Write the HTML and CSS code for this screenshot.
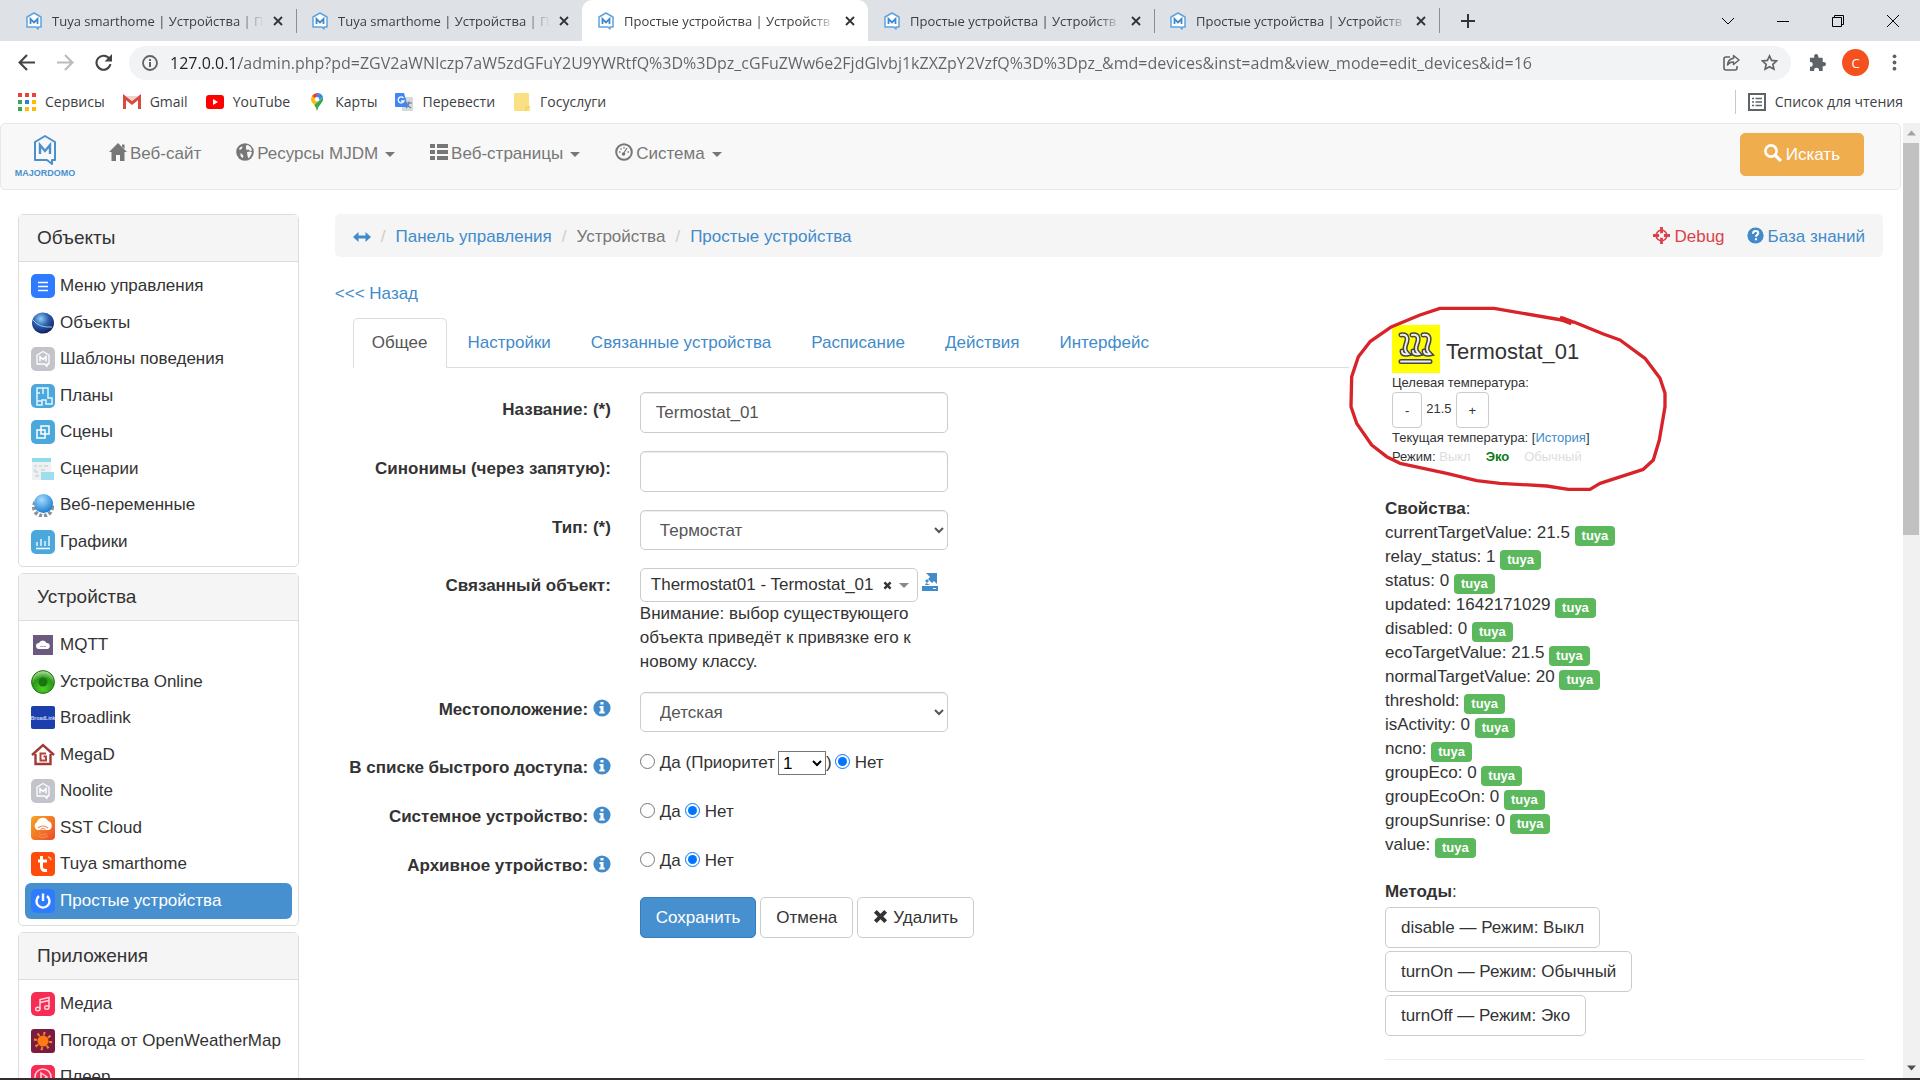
FILE: index.html
```html
<!DOCTYPE html>
<html lang="ru">
<head>
    <meta charset="UTF-8">
    <meta name="viewport" content="width=device-width, initial-scale=1.0">
    <title>Простые устройства | Устройства</title>
    <link rel="stylesheet" href="styles.css">
</head>
<body>

<!-- Icon sprite -->
<svg class="sprite" aria-hidden="true">
    <defs>
        <linearGradient id="g-sst" x1="0" y1="0" x2="1" y2="1"><stop offset="0" stop-color="#f6a623"/><stop offset="1" stop-color="#ee4a2c"/></linearGradient>
        <radialGradient id="g-ball" cx="0.4" cy="0.3" r="0.7"><stop offset="0" stop-color="#8fd0f5"/><stop offset="0.5" stop-color="#2c5fb0"/><stop offset="1" stop-color="#12205f"/></radialGradient>
        <radialGradient id="g-web" cx="0.4" cy="0.3" r="0.7"><stop offset="0" stop-color="#a5dcfb"/><stop offset="1" stop-color="#1d7fd6"/></radialGradient>
        <radialGradient id="g-online" cx="0.5" cy="0.8" r="0.8"><stop offset="0" stop-color="#4bd12a"/><stop offset="0.6" stop-color="#2a9a14"/><stop offset="1" stop-color="#b9e6ae"/></radialGradient>
    </defs>
    <symbol id="i-logo" viewBox="0 0 24 32"><path d="M12 2 22 8v18h-3v4l-5-4H2V8z" fill="none" stroke="#4a90cf" stroke-width="2" stroke-linejoin="round"/><path d="M7 20v-9l5 6 5-6v9" fill="none" stroke="#4a90cf" stroke-width="2.4"/></symbol>
    <symbol id="i-fav" viewBox="0 0 18 18"><path d="M9 1 16 5v10h-3v2l-2-2H2V5z" fill="#fff" stroke="#5fa3dd" stroke-width="1.500" stroke-linejoin="round"/><path d="M5.500 12V7l3.500 3.500L12.500 7v5" fill="none" stroke="#3d8ad0" stroke-width="1.800"/></symbol>
    <symbol id="i-close" viewBox="0 0 10 10"><path d="M1 1l8 8M9 1L1 9" stroke="currentColor" stroke-width="1.800"/></symbol>
    <symbol id="i-home" viewBox="0 0 18 18"><path d="M9 0 18 9h-2.500v9H11v-6H7v6H2.500V9H0z M13 1.500h2.500V6L13 3.500z" fill="currentColor"/></symbol>
    <symbol id="i-globe" viewBox="0 0 18 18"><circle cx="9" cy="9" r="8.800" fill="currentColor"/><path d="M10 2.500l2-.5 3 2.500 1 3-2 .5-1.500-1.500-2 .5-.5-2zM11 9l3.500-.5 1.500 1-1.500 3.500-2 2.500-1-2.500zM3 6l1.500-2 2-.5L6 5.500 4 7zM4.500 10l2 1.500 1 2-1 1.500-2-2z" fill="#f8f8f8"/></symbol>
    <symbol id="i-list" viewBox="0 0 18 18"><path d="M0 1h5v4H0zM7 1h11v4H7zM0 7h5v4H0zM7 7h11v4H7zM0 13h5v4H0zM7 13h11v4H7z" fill="currentColor"/></symbol>
    <symbol id="i-dash" viewBox="0 0 18 18"><circle cx="9" cy="9" r="7.800" fill="none" stroke="currentColor" stroke-width="2"/><path d="M8.500 10.500 12 5M4 9h1.500M12.500 9H14M5.500 5.500l1 1M9 4v1.500" stroke="currentColor" stroke-width="1.300"/><circle cx="8.500" cy="11" r="1.800" fill="currentColor"/></symbol>
    <symbol id="i-search" viewBox="0 0 18 18"><circle cx="7" cy="7" r="5.600" fill="none" stroke="currentColor" stroke-width="2.600"/><path d="M11 11l6 6" stroke="currentColor" stroke-width="3.200"/></symbol>
    <symbol id="i-resize" viewBox="0 0 18 12"><path d="M0 6 5.500 1v3.500h7V1L18 6l-5.500 5V7.500h-7V11z" fill="currentColor"/></symbol>
    <symbol id="i-target" viewBox="0 0 18 18"><circle cx="9" cy="9" r="5.600" fill="none" stroke="currentColor" stroke-width="1.800"/><path d="M7.500 0h3v6.500h-3zM7.500 11.500h3V18h-3zM0 7.500h6.500v3H0zM11.500 7.500H18v3h-6.500z" fill="currentColor"/></symbol>
    <symbol id="i-question" viewBox="0 0 18 18"><circle cx="9" cy="9" r="8.600" fill="currentColor"/><path d="M6.300 7.200c0-4 5.600-3.800 5.600-.8 0 2-2.400 1.800-2.400 4M9.500 12v2" fill="none" stroke="#fff" stroke-width="2.200"/></symbol>
    <symbol id="i-info" viewBox="0 0 18 18"><circle cx="9" cy="9" r="8.600" fill="currentColor"/><path d="M7.500 3h3v2.500h-3zM6.500 7h4v5.500h1.200v2H6.300v-2h1.200V9h-1z" fill="#fff"/></symbol>
    <symbol id="i-share" viewBox="0 0 16 18"><path d="M4 0h11v11l-3-3-2 2-4-4 2-2zM5 6l2 2-2 2-2-2zM4 10l4 2H3zM0 13h16v5H0z" fill="currentColor"/><path d="M11 15.500h3" stroke="#fff"/></symbol>
    <symbol id="i-remove" viewBox="0 0 16 16"><path d="M4 1l4 4 4-4 3 3-4 4 4 4-3 3-4-4-4 4-3-3 4-4-4-4z" fill="currentColor"/></symbol>
    <symbol id="i-mjd" viewBox="0 0 24 24"><rect width="24" height="24" rx="5" fill="#c3c3cb"/><path d="M12 4.500 18 8v9h-2v2.500L13.500 17H6V8z" fill="none" stroke="#fff" stroke-width="1.300" stroke-linejoin="round"/><path d="M9 14.500v-5l3 3 3-3v5" fill="none" stroke="#fff" stroke-width="1.500"/></symbol>
    <symbol id="i-heat" viewBox="0 0 48 48">
        <rect width="48" height="48" fill="#ff0"/>
        <g fill="none" stroke-linecap="round">
            <path d="M9 10c7-1 7 4 5 9s-1 7 2 10c-5 1-6-1-6-3M20 10c7-1 7 4 5 9s-1 7 2 10c-5 1-6-1-6-3M31 10c7-1 7 4 5 9s-1 7 2 10c-5 1-6-1-6-3M9 36.500h29" stroke="#444" stroke-width="5"/>
            <path d="M9 10c7-1 7 4 5 9s-1 7 2 10c-5 1-6-1-6-3M20 10c7-1 7 4 5 9s-1 7 2 10c-5 1-6-1-6-3M31 10c7-1 7 4 5 9s-1 7 2 10c-5 1-6-1-6-3M9 36.500h29" stroke="#eee" stroke-width="2"/>
        </g>
    </symbol>
</svg>

<!-- Browser tabs -->
<div class="tab-strip">
    <div class="browser-tab"><svg class="favicon"><use href="#i-fav"/></svg><span class="tab-title">Tuya smarthome | Устройства | П</span><button class="tab-close" aria-label="Закрыть"><svg><use href="#i-close"/></svg></button></div>
    <div class="browser-tab divided"><svg class="favicon"><use href="#i-fav"/></svg><span class="tab-title">Tuya smarthome | Устройства | П</span><button class="tab-close" aria-label="Закрыть"><svg><use href="#i-close"/></svg></button></div>
    <div class="browser-tab current"><svg class="favicon"><use href="#i-fav"/></svg><span class="tab-title">Простые устройства | Устройств</span><button class="tab-close" aria-label="Закрыть"><svg><use href="#i-close"/></svg></button></div>
    <div class="browser-tab"><svg class="favicon"><use href="#i-fav"/></svg><span class="tab-title">Простые устройства | Устройств</span><button class="tab-close" aria-label="Закрыть"><svg><use href="#i-close"/></svg></button></div>
    <div class="browser-tab divided"><svg class="favicon"><use href="#i-fav"/></svg><span class="tab-title">Простые устройства | Устройств</span><button class="tab-close" aria-label="Закрыть"><svg><use href="#i-close"/></svg></button></div>
    <button class="new-tab" aria-label="Новая вкладка"><svg viewBox="0 0 14 14"><path d="M7 0v14M0 7h14" stroke="#333" stroke-width="2"/></svg></button>
    <div class="window-buttons">
        <button aria-label="Список вкладок"><svg viewBox="0 0 12 12"><path d="M0 3l6 6 6-6" fill="none" stroke="#000"/></svg></button>
        <button aria-label="Свернуть"><svg viewBox="0 0 12 12"><path d="M0 6.500h12" stroke="#000"/></svg></button>
        <button aria-label="Развернуть"><svg viewBox="0 0 12 12"><path d="M.5 2.500h9v9h-9zM2.500 2.500v-2h9v9h-2" fill="none" stroke="#000"/></svg></button>
        <button aria-label="Закрыть окно"><svg viewBox="0 0 12 12"><path d="M0 0l12 12M12 0L0 12" stroke="#000"/></svg></button>
    </div>
</div>

<!-- Address bar -->
<div class="toolbar">
    <button class="tool" aria-label="Назад"><svg viewBox="0 0 16 16"><path d="M16 8H2M8.500 1 1.500 8l7 7" fill="none" stroke="#444" stroke-width="2"/></svg></button>
    <button class="tool" aria-label="Вперёд"><svg viewBox="0 0 16 16"><path d="M0 8h14M7.500 1l7 7-7 7" fill="none" stroke="#bbb" stroke-width="2"/></svg></button>
    <button class="tool" aria-label="Обновить"><svg viewBox="0 0 16 16"><path d="M13.500 4.500A6.600 6.600 0 1 0 14.500 9.500" fill="none" stroke="#444" stroke-width="2"/><path d="M16 0v7H9z" fill="#444"/></svg></button>
    <div class="omnibox">
        <svg class="site-info" viewBox="0 0 16 16"><circle cx="8" cy="8" r="7" fill="none" stroke="#5f6368" stroke-width="1.800"/><path d="M7 7h2v5H7zM7 4h2v2H7z" fill="#5f6368"/></svg>
        <input class="url" type="text" aria-label="Адрес" value="127.0.0.1/admin.php?pd=ZGV2aWNlczp7aW5zdGFuY2U9YWRtfQ%3D%3Dpz_cGFuZWw6e2FjdGlvbj1kZXZpY2VzfQ%3D%3Dpz_&amp;md=devices&amp;inst=adm&amp;view_mode=edit_devices&amp;id=16">
        <button class="tool" aria-label="Поделиться"><svg viewBox="0 0 17 17"><path d="M7 3H3Q1 3 1 5v9q0 2 2 2h9q2 0 2-2v-2" fill="none" stroke="#5f6368" stroke-width="1.600"/><path d="M10.500 1.500 16 6l-5.500 4.500V8Q7 7.500 4.500 11 5 5 10.500 4.200z" fill="none" stroke="#5f6368" stroke-width="1.500" stroke-linejoin="round"/></svg></button>
        <button class="tool" aria-label="Закладка"><svg viewBox="0 0 18 18"><path d="M9 2l2.200 4.800 5.300.6-4 3.500 1.200 5.200L9 13.500l-4.700 2.600 1.200-5.200-4-3.500 5.300-.6z" fill="none" stroke="#5f6368" stroke-width="1.700"/></svg></button>
    </div>
    <button class="tool" aria-label="Расширения"><svg viewBox="0 0 18 18"><path d="M1 4h4.500Q5 0 7.500 0T10 4h4.500v4.500Q18 8 18 10.500T14.500 13v5h-4Q11 14.500 8 14.500T5.500 18H1v-4.500Q4 14 4 11T1 8.500z" fill="#5f6368"/></svg></button>
    <button class="avatar">C</button>
    <button class="tool" aria-label="Меню"><svg viewBox="0 0 18 18"><circle cx="9" cy="2.500" r="2" fill="#5f6368"/><circle cx="9" cy="9" r="2" fill="#5f6368"/><circle cx="9" cy="15.500" r="2" fill="#5f6368"/></svg></button>
</div>

<!-- Bookmarks -->
<div class="bookmarks">
    <a href="#"><svg viewBox="0 0 18 18"><path d="M0 0h4v4H0zM7 0h4v4H7zM14 0h4v4h-4z" fill="#ea4335"/><path d="M0 7h4v4H0z" fill="#34a853"/><path d="M7 7h4v4H7z" fill="#2a7de1"/><path d="M14 7h4v4h-4zM7 14h4v4H7zM14 14h4v4h-4z" fill="#fbbc05"/><path d="M0 14h4v4H0z" fill="#34a853"/></svg>Сервисы</a>
    <a href="#"><svg viewBox="0 0 18 18"><path d="M1.500 16V4L9 10l7.500-6v12" fill="none" stroke="#d84a3e" stroke-width="3"/><path d="M3 3h12l-6 5z" fill="#f1d3d0"/></svg>Gmail</a>
    <a href="#"><svg viewBox="0 0 18 18"><rect y="2" width="18" height="14" rx="3" fill="#f00"/><path d="M7 6l5 3-5 3z" fill="#fff"/></svg>YouTube</a>
    <a href="#"><svg viewBox="0 0 18 18"><path d="M9 18Q8 13 4 9.500A6.400 6.400 0 0 1 4 3l5 3.500z" fill="#fbbc05"/><path d="M4 3a6.500 6.500 0 0 1 6-3L8 6z" fill="#ea4335"/><path d="M10 0q4 .5 5 4L9 9 7 6z" fill="#4285f4"/><path d="M15 4q1 3-1.500 6Q10 13.500 9 18q-1-4-2.500-6z" fill="#34a853"/><circle cx="9" cy="6.300" r="2.300" fill="#fff"/></svg>Карты</a>
    <a href="#"><svg viewBox="0 0 18 18"><rect x="7" y="4" width="11" height="14" rx="1" fill="#d5dadf"/><path d="M11 10h6M14 8.500V10q-.5 3-3 5M12 11q2 3 4 4" fill="none" stroke="#607d8b" stroke-width="1.200"/><path d="M1 0h8l4 14H1q-1 0-1-1V1q0-1 1-1z" fill="#4285f4"/><path d="M8.500 5A3 3 0 1 0 9 8H6" fill="none" stroke="#fff" stroke-width="1.300"/></svg>Перевести</a>
    <a href="#"><svg viewBox="0 0 18 18"><path d="M1 1q0-1 1-1h13q1 0 1 1v12h1v4q0 1-1 1H2q-1 0-1-1z" fill="#fbe083"/><path d="M13 18v-4h3" fill="none" stroke="#eec94f"/></svg>Госуслуги</a>
    <a class="reading-list" href="#"><svg viewBox="0 0 18 18"><rect x="1" y="1" width="16" height="16" fill="none" stroke="#5f6368" stroke-width="2"/><path d="M4 5.500h2M7.500 5.500H14M4 9h2M7.500 9H14M4 12.500h2M7.500 12.500H14" stroke="#5f6368" stroke-width="1.600"/></svg>Список для чтения</a>
</div>

<div class="viewport">
<div class="page">

    <!-- Top navigation -->
    <nav class="navbar">
        <a class="brand" href="#"><svg><use href="#i-logo"/></svg><span>MAJORDOMO</span></a>
        <a class="nav-link" href="#"><svg class="glyph"><use href="#i-home"/></svg>Веб-сайт</a>
        <a class="nav-link" href="#"><svg class="glyph"><use href="#i-globe"/></svg>Ресурсы MJDM<span class="caret"></span></a>
        <a class="nav-link" href="#"><svg class="glyph"><use href="#i-list"/></svg>Веб-страницы<span class="caret"></span></a>
        <a class="nav-link" href="#"><svg class="glyph"><use href="#i-dash"/></svg>Система<span class="caret"></span></a>
        <button class="btn btn-warning"><svg class="glyph"><use href="#i-search"/></svg>Искать</button>
    </nav>

    <div class="columns">

        <!-- Sidebar -->
        <aside class="sidebar">
            <section class="panel">
                <h2>Объекты</h2>
                <ul class="menu">
                    <li><a href="#"><svg viewBox="0 0 24 24"><rect width="24" height="24" rx="5" fill="#2f7bff"/><path d="M7 8.500h10M7 12.500h10M7 16.500h10" stroke="#fff" stroke-width="1.500"/></svg>Меню управления</a></li>
                    <li><a href="#"><svg viewBox="0 0 24 24"><ellipse cx="12" cy="12" rx="11" ry="10.500" fill="url(#g-ball)"/><path d="M2 9q6 8 19 7" fill="none" stroke="#9cc8ef"/></svg>Объекты</a></li>
                    <li><a href="#"><svg><use href="#i-mjd"/></svg>Шаблоны поведения</a></li>
                    <li><a href="#"><svg viewBox="0 0 24 24"><rect width="24" height="24" rx="5" fill="#4aa8dc"/><path d="M6 4h11v10h4v6h-6v-4h-4v5H6zM12 4v6M6 9h3M6 17h5" fill="none" stroke="#e4f5fd" stroke-width="1.500"/></svg>Планы</a></li>
                    <li><a href="#"><svg viewBox="0 0 24 24"><rect width="24" height="24" rx="5" fill="#4aa8dc"/><path d="M10 6h8v8h-8zM6 10h8v8H6z" fill="none" stroke="#fff" stroke-width="1.500"/></svg>Сцены</a></li>
                    <li><a href="#"><svg viewBox="0 0 24 24"><path d="M1 1h19v22H1z" fill="#eef1f2"/><path d="M1 1h19v4H1z" fill="#8fdcea"/><path d="M3 9h3M8 9h3M13 9h4M4 12v3h3M10 13h4M4 19h4" stroke="#bfc5c8" fill="none"/><path d="M10 15h13v8H10z" fill="#9fdcee"/></svg>Сценарии</a></li>
                    <li><a href="#"><svg viewBox="0 0 24 24"><circle cx="12" cy="14" r="9" fill="none" stroke="#8b9197" stroke-width="4" stroke-dasharray="3 2"/><circle cx="12.500" cy="10.500" r="9.500" fill="url(#g-web)"/></svg>Веб-переменные</a></li>
                    <li><a href="#"><svg viewBox="0 0 24 24"><rect width="24" height="24" rx="5" fill="#4aa8dc"/><path d="M5 18.500h14M6 16v-4M10 16V9M14 16v-5M18 16V6" stroke="#fff" stroke-width="1.300"/></svg>Графики</a></li>
                </ul>
            </section>

            <section class="panel">
                <h2>Устройства</h2>
                <ul class="menu">
                    <li><a href="#"><svg viewBox="0 0 24 24"><rect x="2" y="2" width="20" height="20" fill="#6b5a7e"/><path d="M8 16a3 3 0 0 1 0-6 4 4 0 0 1 7.500 0 3 3 0 0 1 .5 6z" fill="#fff"/><path d="M9 13.500h6" stroke="#b3a9bd"/></svg>MQTT</a></li>
                    <li><a href="#"><svg viewBox="0 0 24 24"><circle cx="12" cy="12" r="11.400" fill="url(#g-online)" stroke="#1c6d0f"/><circle cx="12" cy="12" r="4.500" fill="#1a7410"/></svg>Устройства Online</a></li>
                    <li><a href="#"><svg viewBox="0 0 24 24"><rect width="24" height="23" rx="2" fill="#1c3fae"/><text class="tiny-logo" x="12" y="14">BroadLink</text></svg>Broadlink</a></li>
                    <li><a href="#"><svg viewBox="0 0 24 24"><path d="M1 12 12 2l11 10M4.500 11v10h15V11" fill="none" stroke="#a03a36" stroke-width="2.400"/><path d="M15 10.500H9.500v7H15v-4h-2.500" fill="none" stroke="#b5413c" stroke-width="2"/></svg>MegaD</a></li>
                    <li><a href="#"><svg><use href="#i-mjd"/></svg>Noolite</a></li>
                    <li><a href="#"><svg viewBox="0 0 24 24"><rect width="24" height="24" rx="4" fill="url(#g-sst)"/><path d="M6 14a4.500 4.500 0 0 1 0-8 6 6 0 0 1 11-1 4.800 4.800 0 0 1 1 9z" fill="#fff"/><path d="M7 12q5-4 10 0M9.500 13.500q2.500-2 5 0M8 17.500q4 3 8 0M7 20q5 3 10 0" fill="none" stroke="#f08a50" stroke-width="1.200"/></svg>SST Cloud</a></li>
                    <li><a href="#"><svg viewBox="0 0 24 24"><rect width="24" height="24" rx="4" fill="#ff4c0a"/><path d="M10.500 4v11q0 4 5.500 3.500M7 9h9" fill="none" stroke="#fff" stroke-width="3"/><path d="M17 5q3 .5 3 3.500" fill="none" stroke="#ffb79d" stroke-width="1.500"/></svg>Tuya smarthome</a></li>
                    <li><a class="active" href="#"><svg viewBox="0 0 24 24"><rect width="24" height="24" rx="5" fill="#2f7bff"/><path d="M8 7a6.500 6.500 0 1 0 8 0M12 4.500V12" fill="none" stroke="#fff" stroke-width="2.400"/></svg>Простые устройства</a></li>
                </ul>
            </section>

            <section class="panel">
                <h2>Приложения</h2>
                <ul class="menu">
                    <li><a href="#"><svg viewBox="0 0 24 24"><rect width="24" height="24" rx="5" fill="#f72c55"/><path d="M9 17V7.500l9-2V15M9 10.500l9-2" fill="none" stroke="#ffd5dd" stroke-width="1.500"/><ellipse cx="6.800" cy="17" rx="2.200" ry="1.800" fill="none" stroke="#ffd5dd" stroke-width="1.400"/><ellipse cx="15.800" cy="15.500" rx="2.200" ry="1.800" fill="none" stroke="#ffd5dd" stroke-width="1.400"/></svg>Медиа</a></li>
                    <li><a href="#"><svg viewBox="0 0 24 24"><rect width="24" height="24" rx="3" fill="#7a1c42"/><circle cx="12" cy="12" r="7.500" fill="none" stroke="#f5821f" stroke-width="3.500" stroke-dasharray="2 3.900"/><circle cx="12" cy="12" r="5.500" fill="#ff7a14"/></svg>Погода от OpenWeatherMap</a></li>
                    <li><a href="#"><svg viewBox="0 0 24 24"><rect width="24" height="24" rx="5" fill="#f72c55"/><circle cx="12" cy="12" r="8" fill="none" stroke="#ffd5dd" stroke-width="1.500"/><path d="M10 8l6 4-6 4z" fill="none" stroke="#ffd5dd" stroke-width="1.500"/></svg>Плеер</a></li>
                </ul>
            </section>
        </aside>

        <!-- Content -->
        <main class="content">
            <div class="breadcrumb">
                <a href="#" aria-label="Развернуть"><svg class="resize"><use href="#i-resize"/></svg></a>
                <a href="#">Панель управления</a>
                <span>Устройства</span>
                <a href="#">Простые устройства</a>
                <div class="help-links">
                    <a class="debug" href="#"><svg class="glyph"><use href="#i-target"/></svg>Debug</a>
                    <a href="#"><svg class="glyph"><use href="#i-question"/></svg>База знаний</a>
                </div>
            </div>

            <a class="back" href="#">&lt;&lt;&lt; Назад</a>

            <div class="device">
                <div class="device-main">
                    <ul class="nav-tabs">
                        <li><a class="active" href="#">Общее</a></li>
                        <li><a href="#">Настройки</a></li>
                        <li><a href="#">Связанные устройства</a></li>
                        <li><a href="#">Расписание</a></li>
                        <li><a href="#">Действия</a></li>
                        <li><a href="#">Интерфейс</a></li>
                    </ul>

                    <form class="form">
                        <div class="form-row">
                            <label for="title">Название: (*)</label>
                            <input class="form-control" type="text" id="title" value="Termostat_01">
                        </div>
                        <div class="form-row">
                            <label for="alt">Синонимы (через запятую):</label>
                            <input class="form-control" type="text" id="alt">
                        </div>
                        <div class="form-row">
                            <label for="type">Тип: (*)</label>
                            <select class="form-control" id="type"><option>Термостат</option></select>
                        </div>
                        <div class="form-row linked">
                            <label for="linked">Связанный объект:</label>
                            <div>
                                <div class="linked-line">
                                    <div class="select2">
                                        <select id="linked"><option>Thermostat01 - Termostat_01</option></select>
                                        <button type="button" class="clear" aria-label="Очистить"><svg><use href="#i-remove"/></svg></button>
                                        <span class="caret"></span>
                                    </div>
                                    <a href="#" aria-label="Открыть объект"><svg class="share"><use href="#i-share"/></svg></a>
                                </div>
                                <p class="hint">Внимание: выбор существующего объекта приведёт к привязке его к новому классу.</p>
                            </div>
                        </div>
                        <div class="form-row place">
                            <label for="location">Местоположение: <svg class="glyph info"><use href="#i-info"/></svg></label>
                            <select class="form-control" id="location"><option>Детская</option></select>
                        </div>
                        <div class="form-row radios">
                            <span class="label">В списке быстрого доступа: <svg class="glyph info"><use href="#i-info"/></svg></span>
                            <div class="choices">
                                <input type="radio" name="fav" id="fav-yes"><label for="fav-yes">Да (Приоритет</label>
                                <select class="priority" aria-label="Приоритет"><option>1</option></select><span>)</span>
                                <input type="radio" name="fav" id="fav-no" checked><label for="fav-no">Нет</label>
                            </div>
                        </div>
                        <div class="form-row radios">
                            <span class="label">Системное устройство: <svg class="glyph info"><use href="#i-info"/></svg></span>
                            <div class="choices">
                                <input type="radio" name="sys" id="sys-yes"><label for="sys-yes">Да</label>
                                <input type="radio" name="sys" id="sys-no" checked><label for="sys-no">Нет</label>
                            </div>
                        </div>
                        <div class="form-row radios">
                            <span class="label">Архивное утройство: <svg class="glyph info"><use href="#i-info"/></svg></span>
                            <div class="choices">
                                <input type="radio" name="arc" id="arc-yes"><label for="arc-yes">Да</label>
                                <input type="radio" name="arc" id="arc-no" checked><label for="arc-no">Нет</label>
                            </div>
                        </div>
                        <div class="form-actions">
                            <button type="button" class="btn btn-primary">Сохранить</button>
                            <button type="button" class="btn">Отмена</button>
                            <button type="button" class="btn"><svg class="glyph remove"><use href="#i-remove"/></svg>Удалить</button>
                        </div>
                    </form>
                </div>

                <div class="device-side">
                    <div class="thermostat">
                        <div class="thermostat-head">
                            <svg><use href="#i-heat"/></svg>
                            <span>Termostat_01</span>
                        </div>
                        <div>Целевая температура:</div>
                        <div class="target">
                            <button>-</button><span>21.5</span><button>+</button>
                        </div>
                        <div>Текущая температура: [<a href="#">История</a>]</div>
                        <div class="modes">Режим: <a href="#">Выкл</a><a class="on" href="#">Эко</a><a href="#">Обычный</a></div>
                        <!-- Hand-drawn marker ring -->
                        <svg class="ring" viewBox="0 0 1140 660"><path d="M720 82l40 14-238-41H360l-60 20-85 35-65 45-35 45-20 60-2 90 17 50 45 65 45 35 40 20 140 30 90 22 70 8 140 8 65 10h65l30-18 130-42 30-28 18-60 17-100v-40l-15-45-45-60-75-55-50-18-90-37" /><path d="M725 86l30 12" class="blob"/></svg>
                    </div>

                    <div class="properties">
                        <div><b>Свойства</b>:</div>
                        <div>currentTargetValue: 21.5 <span class="badge">tuya</span></div>
                        <div>relay_status: 1 <span class="badge">tuya</span></div>
                        <div>status: 0 <span class="badge">tuya</span></div>
                        <div>updated: 1642171029 <span class="badge">tuya</span></div>
                        <div>disabled: 0 <span class="badge">tuya</span></div>
                        <div>ecoTargetValue: 21.5 <span class="badge">tuya</span></div>
                        <div>normalTargetValue: 20 <span class="badge">tuya</span></div>
                        <div>threshold: <span class="badge">tuya</span></div>
                        <div>isActivity: 0 <span class="badge">tuya</span></div>
                        <div>ncno: <span class="badge">tuya</span></div>
                        <div>groupEco: 0 <span class="badge">tuya</span></div>
                        <div>groupEcoOn: 0 <span class="badge">tuya</span></div>
                        <div>groupSunrise: 0 <span class="badge">tuya</span></div>
                        <div>value: <span class="badge">tuya</span></div>
                    </div>

                    <div class="methods">
                        <div><b>Методы</b>:</div>
                        <button class="btn">disable — Режим: Выкл</button>
                        <button class="btn">turnOn — Режим: Обычный</button>
                        <button class="btn">turnOff — Режим: Эко</button>
                    </div>
                    <hr>
                </div>
            </div>
        </main>
    </div>
</div>

<!-- Scrollbar -->
<div class="scrollbar" aria-hidden="true">
    <svg viewBox="0 0 17 17"><path d="M4 11l4.500-5 4.500 5z" fill="#a3a3a3"/></svg>
    <div class="thumb"></div>
    <svg class="down" viewBox="0 0 17 17"><path d="M4 6l4.500 5L13 6z" fill="#505050"/></svg>
</div>
</div>

</body>
</html>
```
FILE: styles.css
```css
* {
    box-sizing: border-box;
}

body {
    margin: 0;
    height: 100vh;
    display: flex;
    flex-direction: column;
    overflow: hidden;
    border-bottom: 2px solid #332e30;
    background: #fff;
    color: #333;
    font-family: "Liberation Sans", Arial, sans-serif;
    font-size: 17px;
    line-height: 24px;
}

a {
    color: #428bca;
    text-decoration: none;
}

ul {
    list-style: none;
    margin: 0;
    padding: 0;
}

button, input, select {
    font: inherit;
    color: inherit;
}

button {
    padding: 0;
    border: none;
    background: none;
    cursor: pointer;
}

.sprite {
    position: absolute;
    width: 0;
    height: 0;
}

/* Browser window */
.tab-strip, .toolbar, .bookmarks {
    display: flex;
    align-items: center;
    flex: none;
    font-family: "Open Sans", "Noto Sans", sans-serif;
    font-size: 14px;
}

.tab-strip {
    height: 41px;
    padding-left: 10px;
    background: #dee1e6;
    color: #3c4043;
    font-size: 13px;
}

.browser-tab {
    position: relative;
    display: flex;
    align-items: center;
    flex: 0 1 286px;
    min-width: 0;
    height: 41px;
    padding: 0 10px 0 15px;
}

.browser-tab.current {
    background: #fff;
    border-radius: 10px 10px 0 0;
}

.browser-tab.divided::before {
    content: "";
    position: absolute;
    left: 0;
    width: 1px;
    height: 24px;
    background: #8a8d91;
}

.browser-tab.divided:nth-child(5) {
    border-right: 1px solid #8a8d91;
    border-image: linear-gradient(transparent 20%, #8a8d91 20%, #8a8d91 80%, transparent 80%) 1;
}

.favicon {
    flex: none;
    width: 18px;
    height: 18px;
    margin-right: 9px;
}

.tab-title {
    flex: 1;
    overflow: hidden;
    white-space: nowrap;
    mask-image: linear-gradient(to right, #000 88%, transparent);
}

.tab-close {
    display: flex;
    padding: 3px;
    margin-left: 6px;
    color: #333;
}

.tab-close svg {
    width: 10px;
    height: 10px;
}

.new-tab {
    display: flex;
    margin-left: 21px;
}

.new-tab svg {
    width: 14px;
    height: 14px;
}

.window-buttons {
    display: flex;
    margin-left: auto;
}

.window-buttons button {
    display: flex;
    justify-content: center;
    width: 55px;
    height: 34px;
    align-items: center;
}

.window-buttons svg {
    width: 12px;
    height: 12px;
}

.toolbar {
    height: 43px;
    padding: 0 7px 0 16px;
}

.tool {
    display: flex;
    justify-content: center;
    flex: none;
    width: 38px;
}

.tool svg {
    width: 17px;
    height: 17px;
}

.toolbar > .tool:first-child {
    width: 20px;
    margin-right: 10px;
}

.omnibox {
    display: flex;
    align-items: center;
    flex: 1;
    height: 34px;
    margin: 0 7px;
    padding: 0 3px 0 13px;
    border-radius: 17px;
    background: #f1f3f4;
}

.site-info {
    flex: none;
    width: 16px;
    height: 16px;
    margin-right: 12px;
}

.url {
    flex: 1;
    min-width: 0;
    padding: 0;
    border: none;
    outline: none;
    font-size: 16px;
    color: transparent;
    background: linear-gradient(to right, #202124 69px, #5f6368 69px);
    -webkit-background-clip: text;
    background-clip: text;
}

.avatar {
    width: 27px;
    height: 27px;
    margin: 0 6px;
    border-radius: 50%;
    background: #f4511e;
    color: #fff;
    font-size: 13px;
}

.bookmarks {
    height: 39px;
    gap: 18px;
    padding: 0 17px 4px 18px;
}

.bookmarks a {
    display: flex;
    align-items: center;
    gap: 9px;
    color: #3c4043;
}

.bookmarks svg {
    width: 18px;
    height: 18px;
}

.bookmarks .reading-list {
    margin-left: auto;
    padding-left: 12px;
    border-left: 1px solid #c6c8ca;
}

/* Page */
.viewport {
    display: flex;
    flex: 1;
    min-height: 0;
}

.page {
    flex: 1;
    min-width: 0;
    overflow: hidden;
}

.scrollbar {
    display: flex;
    flex-direction: column;
    width: 17px;
    margin-left: 2px;
    background: #f1f1f1;
}

.scrollbar svg {
    width: 17px;
    height: 20px;
}

.scrollbar .thumb {
    height: 41%;
    margin-right: 1px;
    background: #c1c1c1;
}

.scrollbar .down {
    margin-top: auto;
}

.glyph {
    width: 18px;
    height: 18px;
    margin-right: 4px;
    vertical-align: -2px;
}

.caret {
    display: inline-block;
    margin-left: 7px;
    border: 5px solid transparent;
    border-top-color: currentColor;
    border-bottom: none;
    vertical-align: middle;
}

.navbar {
    display: flex;
    align-items: center;
    gap: 35px;
    height: 67px;
    padding: 0 36px 0 15px;
    border: 1px solid #e7e7e7;
    border-radius: 5px;
    background: #f8f8f8;
}

.brand {
    display: flex;
    flex-direction: column;
    align-items: center;
    width: 58px;
    color: #4a90cf;
    font-size: 9px;
    font-weight: bold;
    line-height: 14px;
}

.brand svg {
    width: 28px;
    height: 32px;
}

.nav-link {
    padding-bottom: 6px;
    color: #777;
}

.nav-link .glyph {
    margin-right: 3px;
}

.btn {
    height: 41px;
    padding: 0 15px;
    border: 1px solid #ccc;
    border-radius: 5px;
    background: #fff;
    color: #333;
    white-space: nowrap;
}

.btn-primary {
    background: #4790d0;
    border-color: #357ebd;
    color: #fff;
}

.btn-warning {
    height: 43px;
    margin: 0 0 4px auto;
    padding: 0 23px;
    background: #f0ad4e;
    border-color: #f0ad4e;
    color: #fff;
}

.columns {
    display: flex;
    padding-top: 24px;
}

.sidebar {
    flex: 0 0 16.6667%;
    padding: 0 18px;
}

.panel {
    margin-bottom: 6px;
    border: 1px solid #ddd;
    border-radius: 5px;
}

.panel h2 {
    margin: 0;
    padding: 11px 18px;
    border-bottom: 1px solid #ddd;
    background: #f5f5f5;
    font-size: 19px;
    font-weight: normal;
}

.menu {
    padding: 6px;
}

.menu li:nth-child(odd) {
    margin-bottom: 1px;
}

.menu a {
    display: flex;
    align-items: center;
    gap: 5px;
    height: 36px;
    padding: 0 6px;
    border-radius: 6px;
    color: #333;
    white-space: nowrap;
}

.menu svg {
    flex: none;
    width: 24px;
    height: 24px;
}

.menu a.active {
    background: #4790d0;
    color: #fff;
}

.tiny-logo {
    fill: #cfd8f5;
    font-size: 5px;
    font-weight: bold;
    text-anchor: middle;
}

.content {
    flex: 1;
    min-width: 0;
    padding: 0 18px;
}

.breadcrumb {
    display: flex;
    align-items: center;
    height: 43px;
    padding: 2px 18px 0;
    border-radius: 5px;
    background: #f5f5f5;
    color: #777;
}

.breadcrumb > a + a::before,
.breadcrumb > span::before,
.breadcrumb > span + a::before {
    content: "/";
    padding: 0 10px;
    color: #ccc;
}

.breadcrumb .resize {
    display: block;
    width: 18px;
    height: 12px;
}

.help-links {
    display: flex;
    gap: 22px;
    margin-left: auto;
}

.help-links .glyph {
    width: 17px;
    height: 17px;
}

.debug {
    color: #d9424c;
}

.back {
    display: block;
    width: max-content;
    margin: 25px 0 12px;
}

.device {
    display: flex;
}

.device-main {
    flex: 0 0 66.6667%;
    padding: 0 18px;
}

.device-side {
    flex: 1;
    padding: 7px 18px 0;
}

.nav-tabs {
    display: flex;
    gap: 2px;
    border-bottom: 1px solid #ddd;
}

.nav-tabs a {
    display: block;
    height: 50px;
    margin-bottom: -1px;
    padding: 12px 18px;
    border: 1px solid transparent;
    border-radius: 5px 5px 0 0;
}

.nav-tabs .active {
    border-color: #ddd;
    border-bottom-color: #fff;
    background: #fff;
    color: #555;
}

.form {
    padding-top: 24px;
}

.form-row {
    display: grid;
    grid-template-columns: 258px minmax(0, 308px);
    column-gap: 29px;
    margin-bottom: 18px;
}

.form-row > label, .label {
    justify-self: end;
    padding-top: 6px;
    font-weight: bold;
    text-align: right;
    white-space: nowrap;
}

.form-control {
    width: 100%;
    height: 41px;
    padding: 0 15px;
    border: 1px solid #ccc;
    border-radius: 5px;
    background: #fff;
    color: #555;
    box-shadow: inset 0 1px 1px rgba(0, 0, 0, 0.075);
}

select.form-control {
    height: 40px;
}

.info {
    margin: 0;
    color: #428bca;
}

.linked-line {
    display: flex;
    gap: 4px;
}

.select2 {
    display: flex;
    align-items: center;
    flex: 0 0 278px;
    height: 34px;
    padding: 0 8px 0 10px;
    border: 1px solid #ccc;
    border-radius: 5px;
}

.select2 select {
    appearance: none;
    flex: 1;
    min-width: 0;
    padding: 0;
    border: none;
    background: none;
}

.select2 .caret {
    color: #888;
}

.clear {
    display: flex;
}

.clear svg {
    width: 9px;
    height: 9px;
}

.share {
    width: 16px;
    height: 18px;
    margin-top: 5px;
}

.hint {
    margin: 0;
    padding-right: 20px;
}

.place {
    margin: 18px 0 14px;
}

.radios {
    margin-bottom: 15px;
    min-height: 34px;
}

.radios .label {
    padding-top: 10px;
}

.choices {
    display: flex;
    align-items: center;
    height: 34px;
}

.choices input {
    width: 15px;
    height: 15px;
    margin: 0 5px 4px 0;
}

.choices label + input {
    margin-left: 4px;
}

.choices span + input {
    margin-left: 3px;
}

.priority {
    width: 48px;
    height: 24px;
    margin-left: 3px;
    border: 1px solid #767676;
    border-radius: 0;
    background: #fff;
    color: #000;
}

.form-actions {
    display: flex;
    gap: 4px;
    margin: 19px 0 0 287px;
}

.remove {
    width: 15px;
    height: 15px;
    margin-right: 5px;
    vertical-align: -1px;
}

/* Thermostat preview */
.thermostat {
    position: relative;
    padding-left: 7px;
    font-size: 13px;
    line-height: 19px;
}

.thermostat-head {
    display: flex;
    align-items: center;
    gap: 6px;
    font-size: 22px;
}

.thermostat-head svg {
    width: 48px;
    height: 48px;
}

.thermostat-head span {
    padding-top: 5px;
}

.target {
    display: flex;
    gap: 4px;
}

.target button {
    height: 36px;
    padding: 0 12px;
    border: 1px solid #ccc;
    border-radius: 4px;
}

.target span {
    padding-top: 7px;
}

.modes a {
    margin-right: 15px;
    color: #ddd;
}

.modes .on {
    color: #0a7a14;
    font-weight: bold;
}

.ring {
    position: absolute;
    top: -35px;
    left: -65px;
    width: 380px;
    height: 220px;
    pointer-events: none;
}

.ring path {
    fill: none;
    stroke: #d8232a;
    stroke-width: 10;
    stroke-linejoin: round;
}

.ring .blob {
    stroke-width: 16;
}

.properties {
    margin-top: 31px;
}

.badge {
    display: inline-block;
    height: 20px;
    padding: 0 7px;
    border-radius: 4px;
    background: #5cb85c;
    color: #fff;
    font-size: 13px;
    font-weight: bold;
    line-height: 19px;
    vertical-align: -2px;
}

.properties > div {
    height: 24px;
}

.methods {
    display: flex;
    flex-direction: column;
    align-items: flex-start;
    gap: 3px;
    margin-top: 23px;
}

hr {
    margin: 23px 0;
    border: none;
    border-top: 1px solid #eee;
}
```
